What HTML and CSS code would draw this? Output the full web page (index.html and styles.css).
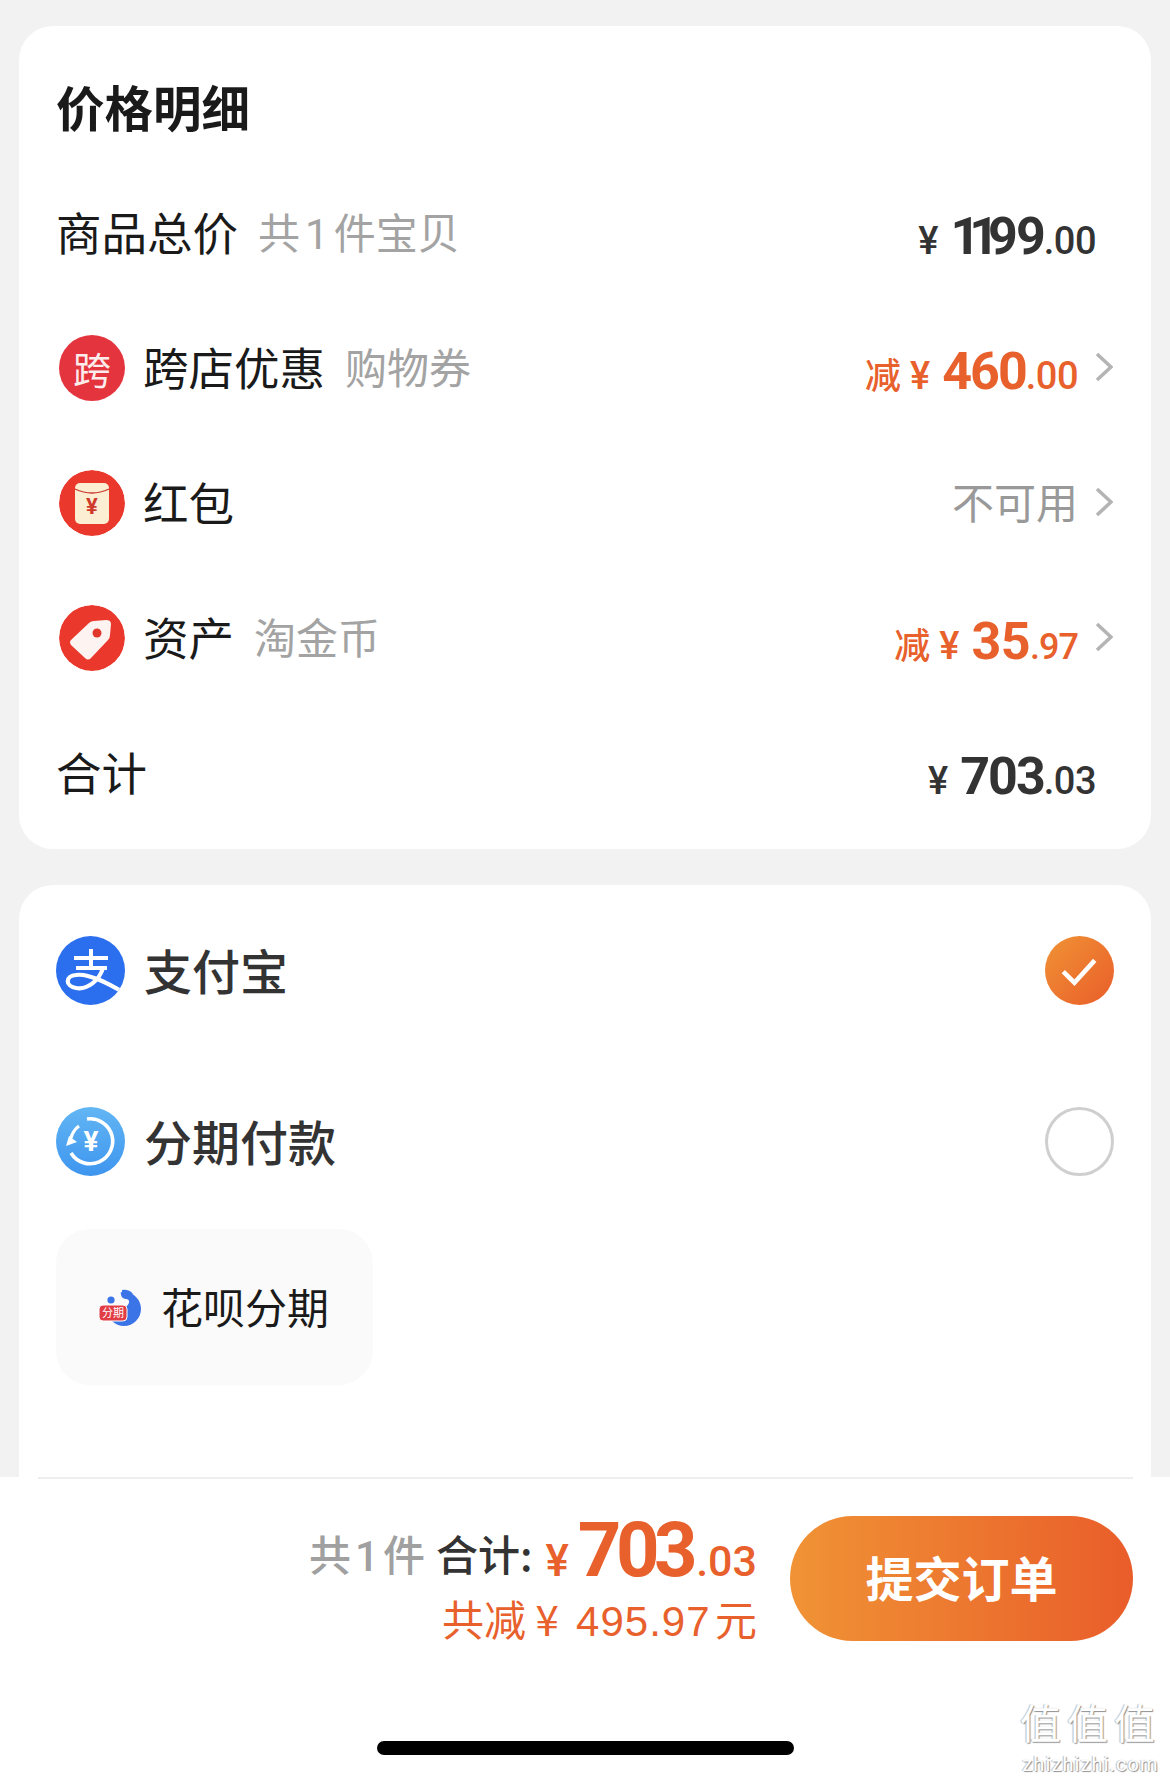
FILE: index.html
```html
<!DOCTYPE html>
<html lang="zh-CN">
<head>
    <meta charset="UTF-8">
    <meta name="viewport" content="width=device-width, initial-scale=1.0">
    <title>确认订单</title>
    <link rel="stylesheet" href="styles.css">
</head>
<body>
    <div class="main">
        <div class="card detail">
            <h1 class="title">价格明细</h1>
            <div class="row">
                <div class="label">商品总价<span class="note">共<i class="num-gap">1</i>件宝贝</span></div>
                <div class="price no-arrow">
                    <span class="yen">¥</span><span class="big"><span class="ones">11</span>99</span><span class="cents">.00</span>
                </div>
            </div>
            <div class="row">
                <div class="label">
                    <span class="badge badge-kua">跨</span>跨店优惠<span class="note">购物券</span>
                </div>
                <div class="right">
                    <div class="price orange">
                        <span class="minus">减</span><span class="yen">¥</span><span class="big">460</span><span class="cents">.00</span>
                    </div>
                    <svg class="arrow" viewBox="0 0 18 30"><polyline points="2,2 16,15 2,28"/></svg>
                </div>
            </div>
            <div class="row">
                <div class="label">
                    <svg class="badge" viewBox="0 0 66 66">
                        <circle cx="33" cy="33" r="33" fill="#ea392c"/>
                        <rect x="16" y="13" width="34" height="41" rx="5" fill="#fbeed3"/>
                        <path d="M16 19 Q33 27 50 19" fill="none" stroke="#c9352a" stroke-width="1.3"/>
                        <text x="33" y="44" class="packet-yen">¥</text>
                    </svg>红包
                </div>
                <div class="right">
                    <div class="unavailable">不可用</div>
                    <svg class="arrow" viewBox="0 0 18 30"><polyline points="2,2 16,15 2,28"/></svg>
                </div>
            </div>
            <div class="row">
                <div class="label">
                    <svg class="badge" viewBox="0 0 66 66">
                        <circle cx="33" cy="33" r="33" fill="#ea392c"/>
                        <path d="M12 35 L30 18 Q32 16 35 16 L47 15 Q52 15 52 19 L51 30 Q51 33 49 35 L32 53 Q29 56 26 53 L12 40 Q10 37 12 35 Z" fill="#fdf3f0"/>
                        <circle cx="38" cy="28" r="4.5" fill="#e0392c"/>
                    </svg>资产<span class="note note-wide">淘金币</span>
                </div>
                <div class="right">
                    <div class="price orange">
                        <span class="minus">减</span><span class="yen">¥</span><span class="big big-wide">35</span><span class="cents cents-narrow">.97</span>
                    </div>
                    <svg class="arrow" viewBox="0 0 18 30"><polyline points="2,2 16,15 2,28"/></svg>
                </div>
            </div>
            <div class="row">
                <div class="label">合计</div>
                <div class="price no-arrow">
                    <span class="yen">¥</span><span class="big">703</span><span class="cents">.03</span>
                </div>
            </div>
        </div>

        <div class="card payment">
            <div class="pay-row">
                <div class="pay-name">
                    <svg class="pay-icon" viewBox="0 0 69 69">
                        <defs><clipPath id="alipay-clip"><circle cx="34.5" cy="34.5" r="34.5"/></clipPath></defs>
                        <circle cx="34.5" cy="34.5" r="34.5" fill="#2b6fee"/>
                        <g clip-path="url(#alipay-clip)" fill="none" stroke="#fff" stroke-width="4">
                            <path d="M18 22 H52 M35 13 V31 M20 32 H51"/>
                            <path d="M47 32 C43 45 31 54 20 52 C9 50 9 40 20 39 C32 37 50 46 70 58" stroke-width="4.2"/>
                        </g>
                    </svg>支付宝
                </div>
                <span class="radio radio-on">
                    <svg viewBox="0 0 68 68"><polyline points="18,35 29,46 49,24"/></svg>
                </span>
            </div>
            <div class="pay-row">
                <div class="pay-name">
                    <svg class="pay-icon" viewBox="0 0 69 69">
                        <defs>
                            <linearGradient id="stage-fill" x1="0" y1="0" x2="0" y2="1">
                                <stop offset="0" stop-color="#62b6f4"/>
                                <stop offset="1" stop-color="#3e95ee"/>
                            </linearGradient>
                        </defs>
                        <circle cx="34.5" cy="34.5" r="34.5" fill="url(#stage-fill)"/>
                        <path d="M31 12 A22.5 22.5 0 1 1 15 46" fill="none" stroke="#fff" stroke-width="3.6"/>
                        <path d="M10 39 L13 29 L21 35 Z" fill="#fff"/>
                        <path d="M15 31 A21 21 0 0 1 23 19" fill="none" stroke="#fff" stroke-width="3.2"/>
                        <text x="35" y="44" class="stage-yen">¥</text>
                    </svg>分期付款
                </div>
                <span class="radio"></span>
            </div>
            <div class="plan">
                <svg class="plan-icon" viewBox="0 0 43 40">
                    <circle cx="26" cy="22" r="17" fill="#3b74e6"/>
                    <path d="M6 3 L23 3 C22 8 24 12 28 12 C32 12 32 16 29 19 L8 19 Z" fill="#fafafa"/>
                    <circle cx="13" cy="13" r="3.6" fill="#3b74e6"/>
                    <path d="M24 3 Q31 2 35 7 L30 9 Q27 6 24 8 Z" fill="#3b74e6"/>
                    <rect x="1" y="18" width="28" height="16" rx="4" fill="#e23d46" stroke="#fff" stroke-width="1"/>
                    <text x="15" y="30" class="plan-tag">分期</text>
                </svg>
                <span class="plan-name">花呗分期</span>
            </div>
        </div>
    </div>

    <div class="footer">
        <div class="divider"></div>
        <div class="submit-bar">
            <div class="summary">
                <div class="sum-line"><span class="sum-count">共<i class="num-gap">1</i>件</span><span class="sum-label">合计:</span><span class="sum-yen">¥</span><span class="sum-big">703</span><span class="sum-cents">.03</span></div>
                <div class="sum-save">共减 ¥ <span class="save-num">495.97</span> 元</div>
            </div>
            <button class="submit-btn"><span>提交订单</span></button>
        </div>
        <div class="home-bar"></div>
    </div>

    <div class="watermark">
        <div class="wm-mark">值值值</div>
        <div class="wm-site">zhizhizhi.com</div>
    </div>
</body>
</html>
```

FILE: styles.css
```css
* {
    box-sizing: border-box;
}
body {
    position: relative;
    width: 1170px;
    height: 1780px;
    margin: 0;
    overflow: hidden;
    background-color: #f2f2f2;
    font-family: "Noto Sans CJK SC", "Liberation Sans", sans-serif;
    color: #1a1a1a;
}
.main {
    display: flex;
    flex-direction: column;
    gap: 36px;
    height: 1477px;
    padding: 26px 19px 0;
}
.card {
    background-color: white;
    border-radius: 34px;
}
.detail {
    height: 823px;
    padding: 0 38px;
}
.title {
    height: 139px;
    margin: 0 0 0 -1px;
    padding-top: 47px;
    font-size: 48.5px;
    line-height: 66px;
    font-weight: 700;
}
.row {
    display: flex;
    justify-content: space-between;
    align-items: center;
    height: 135px;
}
.label {
    display: flex;
    align-items: center;
    margin-left: -1px;
    padding-bottom: 4px;
    font-size: 45.5px;
}
.note {
    margin-left: 20px;
    font-size: 42px;
    color: #a3a3a3;
}
.num-gap {
    margin: 0 5px;
    font-style: normal;
    font-family: "Roboto", sans-serif;
}
.badge {
    display: flex;
    justify-content: center;
    align-items: center;
    flex: none;
    width: 66px;
    height: 66px;
    margin: 4px 18px 0 3px;
    border-radius: 50%;
}
.badge-kua {
    background-color: #e4353f;
    color: #fdecec;
    font-size: 38px;
}
.packet-yen {
    font-family: "Roboto", sans-serif;
    font-size: 22px;
    font-weight: 700;
    text-anchor: middle;
    fill: #cf3a2c;
}
.right {
    display: flex;
    align-items: center;
    gap: 17px;
}
.arrow {
    width: 18px;
    height: 30px;
    margin-top: -2px;
}
.arrow polyline {
    fill: none;
    stroke: #b4b4b4;
    stroke-width: 3.6;
}
.price {
    display: flex;
    align-items: baseline;
    padding-top: 8px;
    font-family: "Roboto", sans-serif;
    font-weight: 700;
    color: #333;
}
.no-arrow {
    margin-right: 17px;
}
.orange {
    color: #e8602c;
}
.yen {
    margin-right: 12px;
    font-size: 38px;
    font-weight: 500;
}
.big {
    font-size: 52px;
    letter-spacing: -2px;
}
.big-wide {
    letter-spacing: -0.5px;
}
.ones {
    letter-spacing: -11px;
}
.cents {
    font-size: 38px;
    font-weight: 500;
    letter-spacing: -0.5px;
}
.cents-narrow {
    font-size: 36px;
    letter-spacing: -1px;
}
.minus {
    margin-right: 9px;
    font-family: "Noto Sans CJK SC", sans-serif;
    font-size: 36px;
    font-weight: 500;
}
.unavailable {
    padding-bottom: 4px;
    font-size: 42px;
    color: #999;
}
.payment {
    display: flex;
    flex-direction: column;
    height: 592px;
    padding: 0 37px;
    border-radius: 34px 34px 0 0;
}
.pay-row {
    display: flex;
    justify-content: space-between;
    align-items: center;
    height: 171px;
}
.pay-name {
    display: flex;
    align-items: center;
    padding-bottom: 4px;
    font-size: 48px;
    font-weight: 500;
    color: #333;
}
.pay-icon {
    flex: none;
    width: 69px;
    height: 69px;
    margin: 4px 19px 0 0;
}
.stage-yen {
    font-family: "Roboto", sans-serif;
    font-size: 28px;
    font-weight: 700;
    text-anchor: middle;
    fill: #fff;
}
.radio {
    width: 69px;
    height: 69px;
    border: 3px solid #cfcfcf;
    border-radius: 50%;
}
.radio-on {
    border: none;
    background: linear-gradient(135deg, #f09335, #e95d2a);
}
.radio-on svg {
    display: block;
}
.radio-on polyline {
    fill: none;
    stroke: white;
    stroke-width: 4.5;
}
.plan {
    display: flex;
    align-items: center;
    width: 317px;
    height: 156px;
    margin-top: 2px;
    padding-left: 42px;
    background-color: #fafafa;
    border-radius: 34px;
    font-size: 42px;
}
.plan-name {
    margin-bottom: 4px;
}
.plan-icon {
    flex: none;
    width: 43px;
    height: 40px;
    margin-right: 20px;
}
.plan-tag {
    font-size: 11px;
    text-anchor: middle;
    fill: #fff;
}
.footer {
    display: flex;
    flex-direction: column;
    height: 303px;
    background-color: white;
}
.divider {
    flex: none;
    height: 2px;
    margin: 0 37px 0 38px;
    background-color: #eeeeee;
}
.submit-bar {
    display: flex;
    justify-content: flex-end;
    align-items: flex-start;
    gap: 33px;
    height: 125px;
    margin-top: 37px;
    padding-right: 37px;
}
.summary {
    display: flex;
    flex-direction: column;
    align-items: flex-end;
    margin-top: -7px;
}
.sum-line {
    height: 82px;
    line-height: 82px;
    font-size: 42px;
    font-weight: 500;
    white-space: nowrap;
}
.sum-count {
    margin-right: 11px;
    vertical-align: 5px;
    color: #a0a0a0;
}
.sum-count .num-gap {
    margin: 0 4px;
}
.sum-label {
    margin-right: 13px;
    vertical-align: 5px;
    color: #333;
}
.sum-yen,
.sum-big,
.sum-cents {
    font-family: "Roboto", sans-serif;
    color: #e8602c;
}
.sum-yen {
    margin-right: 9px;
    font-size: 44px;
    font-weight: 500;
}
.sum-big {
    margin-right: 4px;
    font-size: 76px;
    font-weight: 700;
    letter-spacing: -5.5px;
}
.sum-cents {
    font-size: 43px;
    font-weight: 500;
}
.sum-save {
    font-size: 42px;
    line-height: 54px;
    color: #e8602c;
    white-space: nowrap;
}
.save-num {
    margin: 0 -5px 0 8px;
    font-family: "Liberation Sans", sans-serif;
    letter-spacing: 1px;
}
.submit-btn {
    flex: none;
    width: 343px;
    height: 125px;
    padding: 0 0 5px;
    border: none;
    border-radius: 63px;
    background: linear-gradient(90deg, #f09335, #e95d2a);
    font-family: inherit;
    font-size: 48px;
    font-weight: 700;
    color: white;
}
.home-bar {
    flex: none;
    align-self: center;
    width: 417px;
    height: 14px;
    margin-top: 100px;
    background-color: black;
    border-radius: 7px;
}
.watermark {
    position: absolute;
    right: 9px;
    bottom: 4px;
    text-align: center;
    color: white;
    text-shadow: 1px 1px 1px #8f8f8f, -1px 0 1px #bdbdbd;
}
.wm-mark {
    font-size: 41px;
    line-height: 61px;
    letter-spacing: 6px;
}
.wm-site {
    font-family: "Roboto", sans-serif;
    font-size: 20px;
    line-height: 24px;
    letter-spacing: 1.1px;
}
```
